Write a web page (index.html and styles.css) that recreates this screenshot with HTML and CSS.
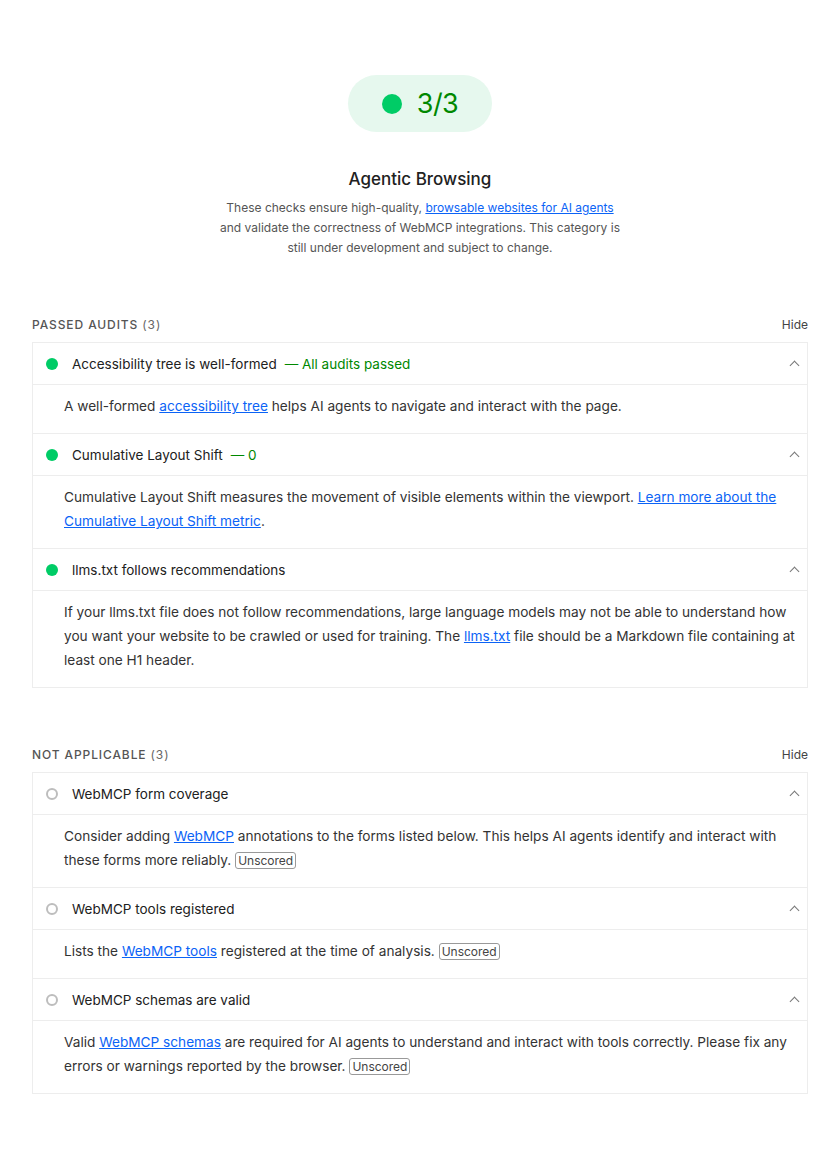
FILE: index.html
```html
<!DOCTYPE html>
<html lang="en">
  <head>
    <meta charset="UTF-8" />
    <meta name="viewport" content="width=device-width, initial-scale=1.0" />
    <title>Agentic Browsing</title>
    <link rel="stylesheet" href="styles.css">
  </head>
  <body>
    <div class="category">
      <div class="score">
        <div class="gauge">
          <span class="gauge-dot"></span>
          <span class="gauge-value">3/3</span>
        </div>
        <h2 class="category-title">Agentic Browsing</h2>
        <p class="category-desc">
          These checks ensure high-quality, <a href="#">browsable websites for AI agents</a>
          and validate the correctness of WebMCP integrations. This category is
          still under development and subject to change.
        </p>
      </div>

      <div class="group">
        <div class="group-header">
          <span class="group-title">Passed audits <span class="count">(3)</span></span>
          <span class="toggle">Hide</span>
        </div>
        <div class="audits">
          <div class="audit">
            <div class="audit-header">
              <span class="icon pass"></span>
              <span class="audit-title">Accessibility tree is well-formed</span>
              <span class="audit-value">— All audits passed</span>
              <span class="chevron"></span>
            </div>
            <p class="audit-body">A well-formed <a href="#">accessibility tree</a> helps AI agents to navigate and interact with the page.</p>
          </div>
          <div class="audit">
            <div class="audit-header">
              <span class="icon pass"></span>
              <span class="audit-title">Cumulative Layout Shift</span>
              <span class="audit-value">— 0</span>
              <span class="chevron"></span>
            </div>
            <p class="audit-body">Cumulative Layout Shift measures the movement of visible elements within the viewport. <a href="#">Learn more about the Cumulative Layout Shift metric</a>.</p>
          </div>
          <div class="audit">
            <div class="audit-header">
              <span class="icon pass"></span>
              <span class="audit-title">llms.txt follows recommendations</span>
              <span class="chevron"></span>
            </div>
            <p class="audit-body">If your llms.txt file does not follow recommendations, large language models may not be able to understand how you want your website to be crawled or used for training. The <a href="#">llms.txt</a> file should be a Markdown file containing at least one H1 header.</p>
          </div>
        </div>
      </div>

      <div class="group">
        <div class="group-header">
          <span class="group-title">Not applicable <span class="count">(3)</span></span>
          <span class="toggle">Hide</span>
        </div>
        <div class="audits">
          <div class="audit">
            <div class="audit-header">
              <span class="icon na"></span>
              <span class="audit-title">WebMCP form coverage</span>
              <span class="chevron"></span>
            </div>
            <p class="audit-body">Consider adding <a href="#">WebMCP</a> annotations to the forms listed below. This helps AI agents identify and interact with these forms more reliably. <span class="badge">Unscored</span></p>
          </div>
          <div class="audit">
            <div class="audit-header">
              <span class="icon na"></span>
              <span class="audit-title">WebMCP tools registered</span>
              <span class="chevron"></span>
            </div>
            <p class="audit-body">Lists the <a href="#">WebMCP tools</a> registered at the time of analysis. <span class="badge">Unscored</span></p>
          </div>
          <div class="audit">
            <div class="audit-header">
              <span class="icon na"></span>
              <span class="audit-title">WebMCP schemas are valid</span>
              <span class="chevron"></span>
            </div>
            <p class="audit-body">Valid <a href="#">WebMCP schemas</a> are required for AI agents to understand and interact with tools correctly. Please fix any errors or warnings reported by the browser. <span class="badge">Unscored</span></p>
          </div>
        </div>
      </div>
    </div>
  </body>
</html>
```

FILE: styles.css
```css
* {
  margin: 0;
  padding: 0;
  box-sizing: border-box;
}

body {
  font-family: Inter, "Liberation Sans", Arial, sans-serif;
  color: #212121;
  background-color: white;
}

a {
  color: #0b63f6;
  text-decoration: underline;
}

.category {
  padding: 75px 32px 40px;
}

.score {
  display: flex;
  flex-direction: column;
  align-items: center;
}

.gauge {
  display: flex;
  align-items: center;
  justify-content: center;
  gap: 15px;
  width: 144px;
  height: 57px;
  border-radius: 29px;
  background-color: #e6f8ee;
}

.gauge-dot {
  width: 20px;
  height: 20px;
  border-radius: 50%;
  background-color: #0c6;
}

.gauge-value {
  font-size: 27px;
  color: #008800;
  letter-spacing: -0.5px;
}

.category-title {
  margin-top: 35px;
  font-size: 17px;
  font-weight: 500;
  line-height: 24px;
  color: #212121;
}

.category-desc {
  margin-top: 7px;
  max-width: 410px;
  font-size: 12px;
  line-height: 20px;
  color: #555;
  text-align: center;
}

.group {
  margin-top: 48px;
}

.group-header {
  display: flex;
  justify-content: space-between;
  align-items: center;
  height: 36px;
}

.group-title {
  font-size: 12px;
  font-weight: 500;
  letter-spacing: 0.9px;
  text-transform: uppercase;
  color: #555;
}

.count {
  color: #666;
  font-weight: 400;
}

.toggle {
  font-size: 12px;
  color: #444;
}

.audits {
  border: 1px solid #ededed;
}

.audit + .audit {
  border-top: 1px solid #ededed;
}

.audit-header {
  display: flex;
  align-items: center;
  height: 42px;
  padding: 0 9px 0 13px;
  font-size: 13.5px;
  border-bottom: 1px solid #ededed;
}

.icon {
  flex: none;
  width: 12px;
  height: 12px;
  margin-right: 14px;
  border-radius: 50%;
}

.pass {
  background-color: #0c6;
}

.na {
  border: 2px solid #bdbdbd;
}

.audit-title {
  color: #212121;
}

.audit-value {
  margin-left: 8px;
  color: #008800;
}

.chevron {
  margin-left: auto;
  width: 7px;
  height: 7px;
  margin-top: 4px;
  border-left: 1.5px solid #777;
  border-top: 1.5px solid #777;
  transform: rotate(45deg);
}

.audit-body {
  padding: 9px 10px 15px 31px;
  font-size: 13.65px;
  line-height: 24px;
  color: #333;
}

.badge {
  display: inline-block;
  padding: 0 2px;
  font-size: 12px;
  line-height: 15px;
  color: #444;
  border: 1px solid #999;
  border-radius: 3px;
}
```
